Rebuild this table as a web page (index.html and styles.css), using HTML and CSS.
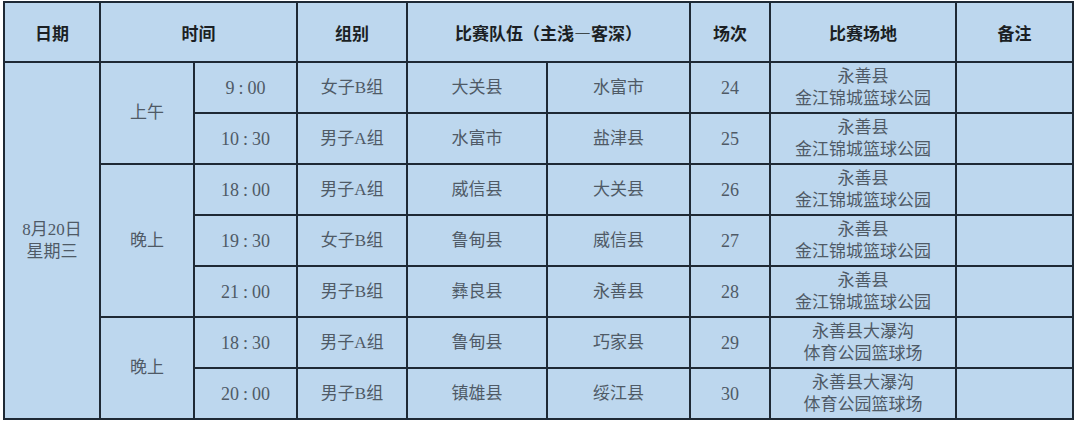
FILE: index.html
```html
<!DOCTYPE html>
<html lang="zh-CN">
<head>
<meta charset="utf-8">
<link rel="stylesheet" href="styles.css">
</head>
<body>
<table class="schedule">
  <colgroup>
    <col class="c-date"><col class="c-half"><col class="c-time"><col class="c-group">
    <col class="c-home"><col class="c-away"><col class="c-no"><col class="c-venue"><col class="c-note">
  </colgroup>
  <thead>
    <tr class="head">
      <th>日期</th>
      <th colspan="2">时间</th>
      <th>组别</th>
      <th colspan="2">比赛队伍（主浅—客深）</th>
      <th>场次</th>
      <th>比赛场地</th>
      <th>备注</th>
    </tr>
  </thead>
  <tbody>
    <tr>
      <td rowspan="7" class="two">8月20日<br>星期三</td>
      <td rowspan="2">上午</td>
      <td class="num">9<span class="sep">:</span>00</td>
      <td>女子B组</td><td>大关县</td><td>水富市</td>
      <td class="num">24</td>
      <td class="two">永善县<br>金江锦城篮球公园</td>
      <td></td>
    </tr>
    <tr>
      <td class="num">10<span class="sep">:</span>30</td>
      <td>男子A组</td><td>水富市</td><td>盐津县</td>
      <td class="num">25</td>
      <td class="two">永善县<br>金江锦城篮球公园</td>
      <td></td>
    </tr>
    <tr>
      <td rowspan="3">晚上</td>
      <td class="num">18<span class="sep">:</span>00</td>
      <td>男子A组</td><td>威信县</td><td>大关县</td>
      <td class="num">26</td>
      <td class="two">永善县<br>金江锦城篮球公园</td>
      <td></td>
    </tr>
    <tr>
      <td class="num">19<span class="sep">:</span>30</td>
      <td>女子B组</td><td>鲁甸县</td><td>威信县</td>
      <td class="num">27</td>
      <td class="two">永善县<br>金江锦城篮球公园</td>
      <td></td>
    </tr>
    <tr>
      <td class="num">21<span class="sep">:</span>00</td>
      <td>男子B组</td><td>彝良县</td><td>永善县</td>
      <td class="num">28</td>
      <td class="two">永善县<br>金江锦城篮球公园</td>
      <td></td>
    </tr>
    <tr>
      <td rowspan="2">晚上</td>
      <td class="num">18<span class="sep">:</span>30</td>
      <td>男子A组</td><td>鲁甸县</td><td>巧家县</td>
      <td class="num">29</td>
      <td class="two">永善县大瀑沟<br>体育公园篮球场</td>
      <td></td>
    </tr>
    <tr>
      <td class="num">20<span class="sep">:</span>00</td>
      <td>男子B组</td><td>镇雄县</td><td>绥江县</td>
      <td class="num">30</td>
      <td class="two">永善县大瀑沟<br>体育公园篮球场</td>
      <td></td>
    </tr>
  </tbody>
</table>
</body>
</html>
```

FILE: styles.css
```css
html, body {
  margin: 0;
  padding: 0;
  background: #ffffff;
}
body {
  padding: 1px 0 0 3px;
}
.schedule {
  width: 1071px;
  table-layout: fixed;
  border-collapse: collapse;
  background: #bdd7ee;
  font-family: "Liberation Serif", "Noto Sans CJK SC", serif;
  font-size: 17px;
  color: #4f5a66;
}
.c-date { width: 96px; }
.c-half { width: 94px; }
.c-time { width: 103px; }
.c-group { width: 110px; }
.c-home { width: 140px; }
.c-away { width: 143px; }
.c-no { width: 80px; }
.c-venue { width: 186px; }
.c-note { width: 117px; }
.schedule th,
.schedule td {
  border: 2px solid #1e2935;
  padding: 0;
  text-align: center;
  vertical-align: middle;
}
.schedule th {
  font-family: "Noto Sans CJK SC", sans-serif;
  font-weight: 700;
  font-size: 17px;
  color: #1b1f24;
}
.head {
  height: 60px;
}
.schedule tbody tr {
  height: 51px;
}
.schedule td {
  line-height: 22px;
}
.num {
  font-size: 18px;
}
.sep {
  margin: 0 4px;
}
.two {
  line-height: 22px;
}
```
